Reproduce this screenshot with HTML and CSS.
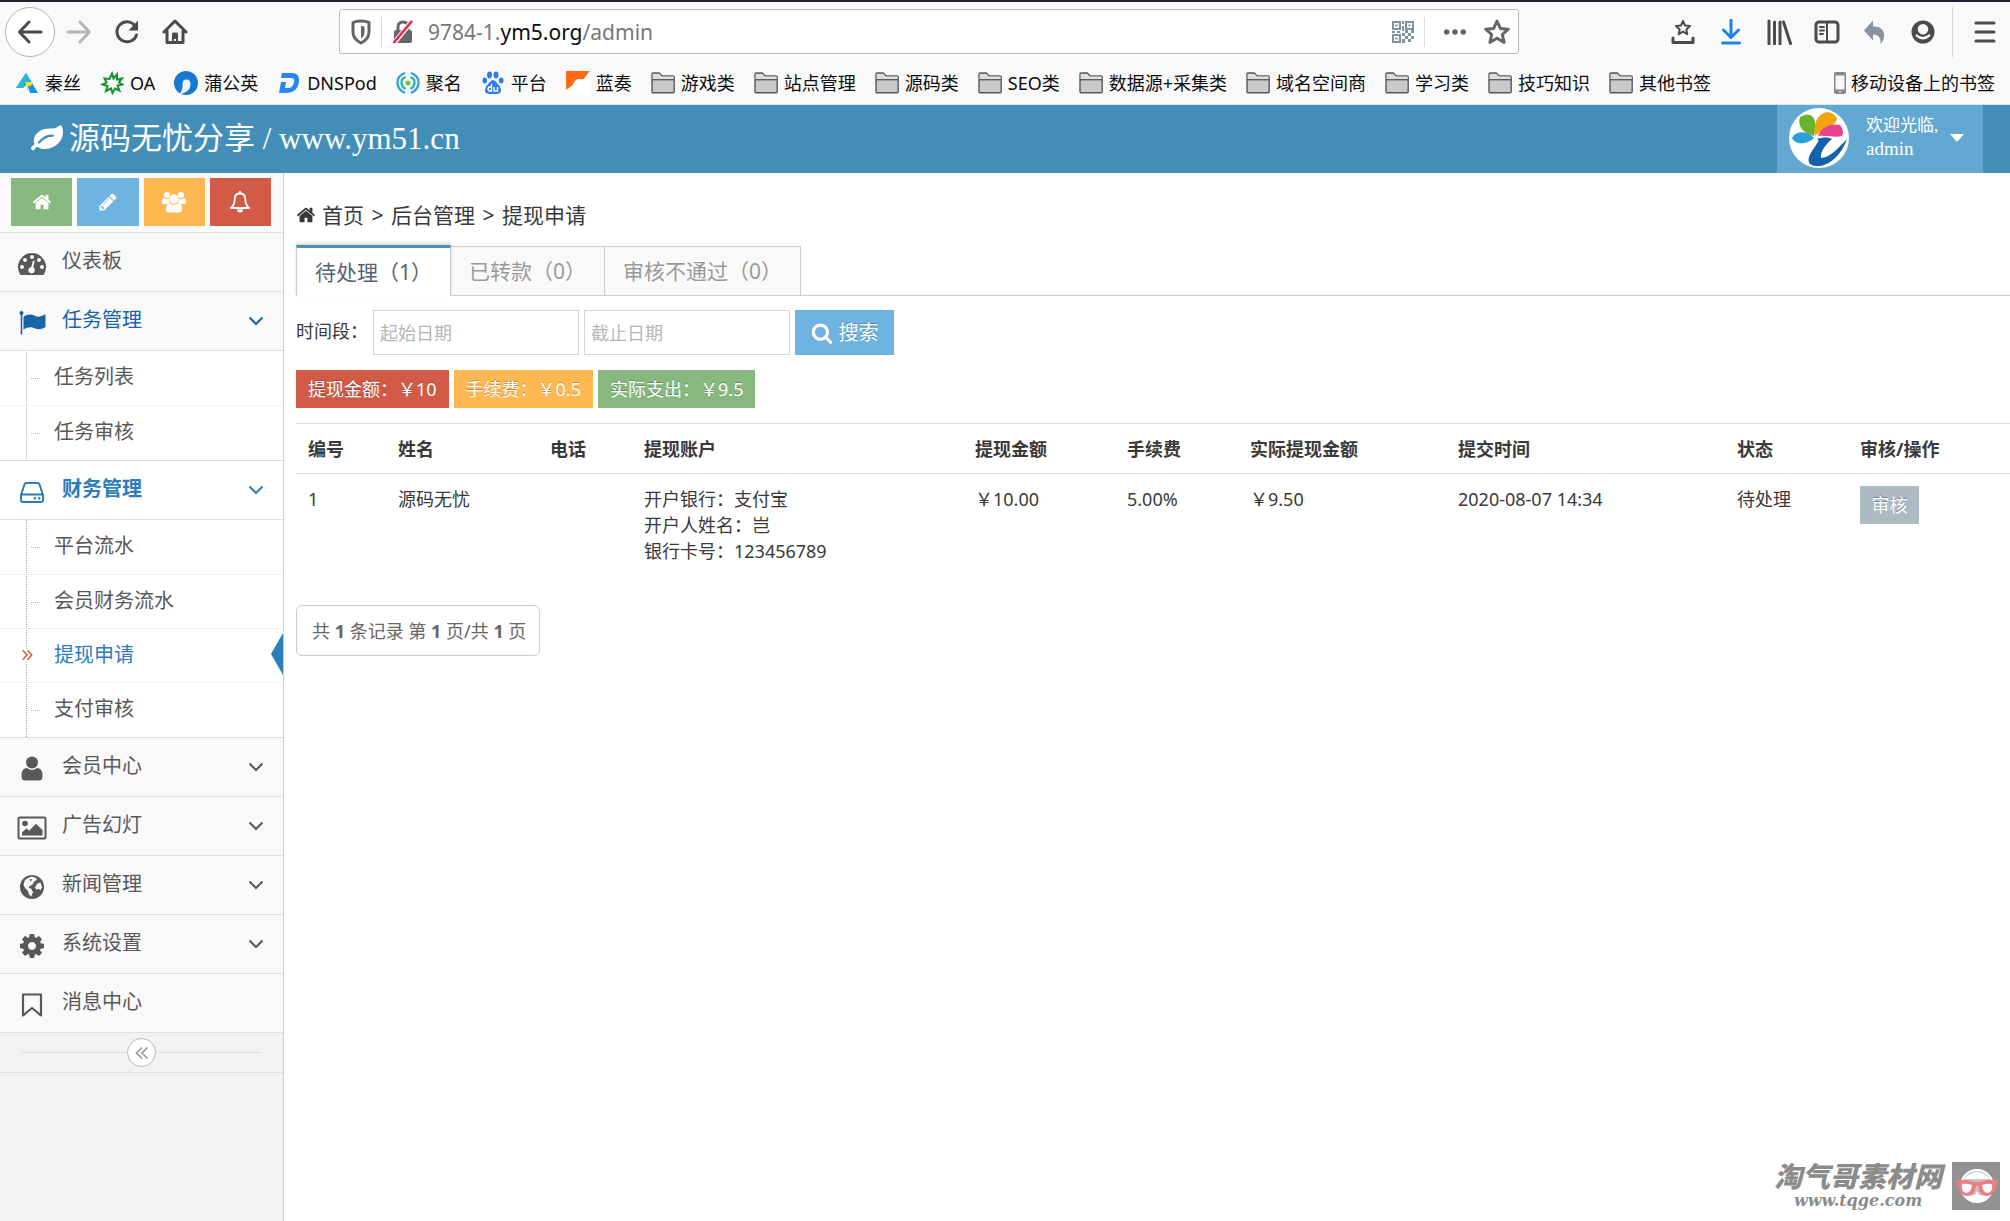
FILE: index.html
```html
<!DOCTYPE html>
<html lang="zh-CN">
<head>
<meta charset="utf-8">
<meta name="viewport" content="width=device-width, initial-scale=1">
<title>提现申请 - 后台管理</title>
<link rel="stylesheet" href="styles.css">
</head>
<body>
<svg class="sprite" aria-hidden="true">
  <symbol id="home" viewBox="0 0 1792 1792"><path d="M1472 992v480q0 26-19 45t-45 19h-384v-384h-256v384h-384q-26 0-45-19t-19-45v-480q0-1 .5-3t.5-3l575-474 575 474q1 2 1 6zm223-69l-62 74q-8 9-21 11h-3q-13 0-21-7l-692-577-692 577q-12 8-24 7-13-2-21-11l-62-74q-8-10-7-23.5t11-21.5l719-599q32-26 76-26t76 26l244 204v-195q0-14 9-23t23-9h192q14 0 23 9t9 23v408l219 182q10 8 11 21.5t-7 23.5z"/></symbol>
  <symbol id="leaf" viewBox="0 0 1792 1792"><path d="M1280 704q0-26-19-45t-45-19q-172 0-318 49.5t-259.5 134-235.5 219.5q-19 21-19 45 0 26 19 45t45 19q24 0 45-19 27-24 74-71t67-66q137-124 268.5-176t313.5-52q26 0 45-19t19-45zm512-198q0 95-20 193-46 224-184.5 383t-357.5 268q-214 108-438 108-148 0-286-47-15-5-88-42t-96-37q-16 0-39.5 32t-45 70-52.5 70-60 32q-43 0-63.5-17.5t-45.5-59.5q-2-4-6-11t-5.5-10-3-9.5-1.5-13.5q0-35 31-73.5t68-65.5 68-56 31-48q0-4-14-38t-16-44q-9-51-9-104 0-115 43.5-220t119-184.5 170.5-139 204-95.5q55-18 145-25.5t179.5-9 178.5-6 163.5-24 113.5-56.5l29.5-29.5 29.5-28 27-20 36.5-16 43.5-4.5q39 0 70.5 46t47.5 112 24 124 8 96z"/></symbol>
  <symbol id="pencil" viewBox="0 0 1792 1792"><path d="M491 1536l91-91-235-235-91 91v107h128v128h107zm523-928q0-22-22-22-10 0-17 7l-542 542q-7 7-7 17 0 22 22 22 10 0 17-7l542-542q7-7 7-17zm-54-192l416 416-832 832h-416v-416zm683 96q0 53-37 90l-166 166-416-416 166-165q36-38 90-38 53 0 91 38l235 234q37 39 37 91z"/></symbol>
  <symbol id="search" viewBox="0 0 1792 1792"><path d="M1216 832q0-185-131.5-316.5t-316.5-131.5-316.5 131.5-131.5 316.5 131.5 316.5 316.5 131.5 316.5-131.5 131.5-316.5zm512 832q0 52-38 90t-90 38q-54 0-90-38l-343-342q-179 124-399 124-143 0-273.5-55.5t-225-150-150-225-55.5-273.5 55.5-273.5 150-225 225-150 273.5-55.5 273.5 55.5 225 150 150 225 55.5 273.5q0 220-124 399l343 343q37 37 37 90z"/></symbol>
  <symbol id="cog" viewBox="0 0 1792 1792"><path d="M1152 896q0-106-75-181t-181-75-181 75-75 181 75 181 181 75 181-75 75-181zm512-109v222q0 12-8 23t-20 13l-185 28q-19 54-39 91 35 50 107 138 10 12 10 25t-9 23q-27 37-99 108t-94 71q-12 0-26-9l-138-108q-44 23-91 38-16 136-29 186-7 28-36 28h-222q-14 0-24.5-8.5t-11.5-21.5l-28-184q-49-16-90-37l-141 107q-10 9-25 9-14 0-25-11-126-114-165-168-7-10-7-23 0-12 8-23 15-21 51-66.5t54-70.5q-27-50-41-99l-183-27q-13-2-21-12.5t-8-23.5v-222q0-12 8-23t19-13l186-28q14-46 39-92-40-57-107-138-10-12-10-24 0-10 9-23 26-36 98.5-107.5t94.5-71.5q13 0 26 10l138 107q44-23 91-38 16-136 29-186 7-28 36-28h222q14 0 24.5 8.5t11.5 21.5l28 184q49 16 90 37l142-107q9-9 24-9 13 0 25 10 129 119 165 170 7 8 7 22 0 12-8 23-15 21-51 66.5t-54 70.5q26 50 41 98l183 28q13 2 21 12.5t8 23.5z"/></symbol>
  <symbol id="users" viewBox="0 0 24 24"><circle cx="5" cy="5" r="3"/><circle cx="19" cy="5" r="3"/><path d="M0 13.500V11q0-3 2-3 3 2 5 .5Q7 11 8 12.500L6 14H2q-2 0-2-.5zM24 13.500V11q0-3-2-3-3 2-5 .5 0 2.500-1 4l2 1.500h4q2 0 2-.5z"/><circle cx="12" cy="9" r="4.700"/><path d="M4 19.500q0-5.800 3.600-6.200 4.400 3 8.800 0 3.600.4 3.600 6.200 0 3-3 3H7q-3 0-3-3z"/></symbol>
  <symbol id="bell" viewBox="0 0 24 24"><path d="M12 3.500c-3.500 0-5.300 2.500-5.300 5.500 0 4.500-1.200 6.800-3.700 9h18c-2.500-2.200-3.700-4.500-3.700-9 0-3-1.800-5.500-5.300-5.500z" fill="none" stroke="currentColor" stroke-width="1.800" stroke-linejoin="round"/><circle cx="12" cy="2.500" r="1.500"/><path d="M9 19.500h6a3 3 0 0 1-6 0z"/></symbol>
  <symbol id="gauge" viewBox="0 0 28 28"><path fill-rule="evenodd" d="M14 3a14 14 0 0 0-11.800 21.400q.4.600 1.100.600h21.400q.7 0 1.100-.600A14 14 0 0 0 14 3zM4 15a2 2 0 1 1 0 4 2 2 0 0 1 0-4zm3-7a2 2 0 1 1 0 4 2 2 0 0 1 0-4zm7-3a2 2 0 1 1 0 4 2 2 0 0 1 0-4zm7 3a2 2 0 1 1 0 4 2 2 0 0 1 0-4zm3 7a2 2 0 1 1 0 4 2 2 0 0 1 0-4zm-8.300-4.600q1.200.200.900 1.200l-1.300 5.900a3.200 3.200 0 1 1-2-.500l1.400-5.800q.300-.900 1-.800z"/></symbol>
  <symbol id="flag" viewBox="0 0 28 28"><circle cx="3.500" cy="4" r="2"/><path d="M2.700 4h1.600v21.500H2.700zM5.500 7.500C9 5.500 13 4.500 17 6.800c3 1.600 6 .8 10.500-1.600V18c-4 2.400-7.500 3-11 1.200-3.700-1.800-7-.8-11 1.200z"/></symbol>
  <symbol id="drive" viewBox="0 0 28 28"><g fill="none" stroke="currentColor" stroke-width="2" stroke-linejoin="round"><path d="M3 16.500h22V22q0 2-2 2H5q-2 0-2-2zM3 17L6.500 6.500Q7 5 8.500 5h11q1.500 0 2 1.500L25 17"/></g><circle cx="17" cy="20.300" r="1.200"/><circle cx="21.200" cy="20.300" r="1.200"/></symbol>
  <symbol id="user" viewBox="0 0 28 28"><circle cx="14" cy="7.500" r="6"/><path d="M3.500 21q0-8 5.500-8 5 4 10 0 5.500 0 5.500 8 0 4.500-3.500 4.500H7q-3.500 0-3.500-4.500z"/></symbol>
  <symbol id="image" viewBox="0 0 30 28"><rect x="1.500" y="3.500" width="27" height="21" rx="1.500" fill="none" stroke="currentColor" stroke-width="2"/><circle cx="8" cy="9.500" r="2.800"/><path d="M5 21.500v-3l4.500-4.200 2.500 2.400 7-7 6.500 6.300v5.500z"/></symbol>
  <symbol id="globe" viewBox="0 0 28 28"><circle cx="14" cy="14" r="12"/><path class="cut" d="M11 4.500l3-1 4 1.500 1 2-2.500 1-1.500 3-3 2-1.500 1.500 3 1.500.5 2 1.500 1-1.500 2-.5 2.500-2.500-2-1-3.500-3-3-1.500-3.500 1.500-4.500zM19.500 10.500l3-1 1.500 4.500-1.500 3.500-1.500-1.500-3 .5-1-2.500z"/><path d="M11.500 6l3 .500-2 2z"/></symbol>
  <symbol id="bookmark" viewBox="0 0 28 28"><path d="M5 3.500h18v21L14 17l-9 7.500z" fill="none" stroke="currentColor" stroke-width="2.200" stroke-linejoin="round"/></symbol>
  <symbol id="chev" viewBox="0 0 16 10"><path d="M1.500 1.500L8 8l6.500-6.500" fill="none" stroke="currentColor" stroke-width="2"/></symbol>
  <symbol id="dleft" viewBox="0 0 14 14"><path d="M7 1.500L1.500 7 7 12.500M12.500 1.500L7 7l5.500 5.500" fill="none" stroke="currentColor" stroke-width="1.600"/></symbol>
  <symbol id="dright" viewBox="0 0 14 14"><path d="M2 1.500L7 7l-5 5.500M7.500 1.500l5 5.500-5 5.500" fill="none" stroke="currentColor" stroke-width="1.800"/></symbol>
  <symbol id="folder" viewBox="0 0 24 24"><path d="M1 20.500V3.200Q1 2 2.200 2h6l3 3H22q1.200 0 1.200 1.200v14.300q0 1.200-1.200 1.200H2.200Q1 21.700 1 20.500z" fill="#c9c9cb" stroke="#58585a" stroke-width="1.400"/><path d="M1.700 3h6.500l2.500 2.500h11.800v3H1.700z" fill="#dededf"/><path d="M1 8.700h22.200" stroke="#58585a" stroke-width="1.300"/></symbol>
</svg>

<div class="browser">
  <div class="toolbar">
    <nav class="nav-buttons" aria-label="浏览器导航">
      <button class="tool back" aria-label="后退"><svg viewBox="0 0 26 26"><path d="M24 13H3M12 3L2.500 13 12 23" class="line"/></svg></button>
      <button class="tool faded" aria-label="前进"><svg viewBox="0 0 26 26"><path d="M2 13h21M14 3l9.500 10L14 23" class="line"/></svg></button>
      <button class="tool" aria-label="刷新"><svg viewBox="0 0 26 26"><path d="M21.500 7.500A10 10 0 1 0 22.500 16" class="line"/><path d="M24 1.500v10H14.500z"/></svg></button>
      <button class="tool" aria-label="主页"><svg viewBox="0 0 26 26"><path d="M2 13L13 2l11 11M5 12v11.500h16V12" class="line"/><path d="M10 15q0-1.500 1.500-1.500h3Q16 13.500 16 15v9h-2v-4h-2v4h-2z"/></svg></button>
    </nav>
    <div class="urlbar">
      <button class="cell shield" aria-label="跟踪保护"><svg viewBox="0 0 24 26"><path d="M12 2q5 0 8 1.500V13q0 7-8 11-8-4-8-11V3.500Q7 2 12 2z" class="line"/><path d="M12 7q2 0 3.500.5V13q0 4-3.500 6.500z"/></svg></button>
      <button class="cell" aria-label="连接不安全"><svg viewBox="0 0 24 26"><path d="M7 12V8q0-5 5-5t5 5v4" class="line"/><rect x="3" y="11" width="18" height="13" rx="2"/><path d="M3 24L21 2" stroke="#f8f8f8" stroke-width="5"/><path d="M2.500 24L21 2" stroke="#e22850" stroke-width="2.600"/></svg></button>
      <span class="url">9784-1.<b>ym5.org</b>/admin</span>
      <button class="cell qr" aria-label="二维码"><svg viewBox="0 0 24 24"><g fill="none" stroke="currentColor" stroke-width="2"><rect x="2" y="2" width="7" height="7"/><rect x="15" y="2" width="7" height="7"/><rect x="2" y="15" width="7" height="7"/></g><path d="M4.500 4.500h2v2h-2zM17.500 4.500h2v2h-2zM4.500 17.500h2v2h-2zM11 1h2v3h-2zM11 6h2v5h-2zM1 11h3v2H1zM6 11h3v2H6zM11 13h3v3h-3zM14 16h3v3h-3zM17 13h3v3h-3zM20 16h3v3h-3zM17 19h3v3h-3zM11 19h3v4h-3zM14 10h3v3h-3zM20 10h3v3h-3z"/></svg></button>
      <button class="cell dots" aria-label="页面操作"><svg viewBox="0 0 26 26"><circle cx="4" cy="13" r="3"/><circle cx="13" cy="13" r="3"/><circle cx="22" cy="13" r="3"/></svg></button>
      <button class="cell star" aria-label="收藏"><svg viewBox="0 0 26 26"><path d="M13 2l3.300 7.400 8 .8-6 5.300 1.800 7.900-7.100-4.200-7.100 4.200 1.800-7.900-6-5.300 8-.8z" class="line"/></svg></button>
    </div>
    <div class="tools">
      <button class="tool" aria-label="书签菜单"><svg viewBox="0 0 26 26"><path d="M13 2l2 4.500 5 .5-3.700 3.400 1 4.800-4.300-2.500-4.300 2.500 1-4.800L6 7l5-.5z" class="line thin"/><path d="M3 19v4.500h20V19" class="line"/></svg></button>
      <button class="tool blue" aria-label="下载"><svg viewBox="0 0 26 26"><path d="M13 1v17M5.500 11l7.500 7.500L20.500 11M4.500 24h17" class="line"/></svg></button>
      <button class="tool" aria-label="我的足迹"><svg viewBox="0 0 26 26"><path d="M3 2v23M8.500 3v22M14 3v22M17.500 3l7 21.500" class="line"/></svg></button>
      <button class="tool" aria-label="侧栏"><svg viewBox="0 0 26 26"><rect x="2" y="3" width="22" height="20" rx="3" class="line"/><path d="M13 3v20M6 8h4M6 11.500h4M6 15h3" class="line thin"/></svg></button>
      <button class="tool gray" aria-label="撤销"><svg viewBox="0 0 26 26"><path d="M11 1.500v6C19 7 23 12 22 18q-.5 4-3.500 7 1.500-9-7.500-9.500v6L2 11.500z"/></svg></button>
      <button class="tool" aria-label="账户"><svg viewBox="0 0 26 26"><path fill-rule="evenodd" d="M13 1.500a11.500 11.500 0 1 0 0 23 11.500 11.500 0 0 0 0-23zM13 5a5 5 0 1 1 0 10.500A5 5 0 0 1 13 5zM6.500 15q6 6 13 0l1 2q-7.500 7-15 0z"/></svg></button>
      <span class="divider"></span>
      <button class="tool" aria-label="菜单"><svg viewBox="0 0 26 26"><path d="M4 4h18M4 13h18M4 22h18" class="line"/></svg></button>
    </div>
  </div>
  <div class="bookmarks">
    <a href="#"><svg viewBox="0 0 24 24"><path d="M11 2L23 22h-8l-3-9-4 4H1z" fill="#1593e5"/><path d="M11 2l5 8-6 1-2 6H1z" fill="#27b8dc"/><path d="M10 11h8l-2 4h-3v6z" fill="#ffe11b"/></svg>秦丝</a>
    <a href="#"><svg viewBox="0 0 24 24"><path d="M12 2.500l1.500 5 3.500-4v5l5-1-3 4 3.500 2-5 1 2 5-4.500-2-2.500 4.500-1.500-4.500-5 2.500 1.500-5-5-1.500 4-2-2-4 5 .5z" fill="none" stroke="#12952c" stroke-width="2"/></svg>OA</a>
    <a href="#"><svg viewBox="0 0 24 24"><circle cx="12" cy="12" r="12" fill="#1678cf"/><path d="M8.500 12.500q0-4 4-4t4 4.500q0 6-5.500 8.500L5 24q4-5 3.500-11.500z" fill="#e9f2f9"/></svg>蒲公英</a>
    <a href="#"><svg viewBox="0 0 24 24"><path d="M5 2h10q8 0 7 9-2 11-12 11H2L4 11h5l-1 6h3q5 0 6-6 1-4-3-4H4z" fill="#2a86f3"/></svg>DNSPod</a>
    <a href="#"><svg viewBox="0 0 24 24"><g fill="none" stroke-width="2.300"><path d="M9 2Q1 5 1.500 12T9 22M15 2q8 3 7.500 10T15 22" stroke="#2f9de4"/><path d="M9.500 6Q5 8 5.500 12t4 6M14.500 6q4.500 2 4 6t-4 6" stroke="#24b6b4"/></g><circle cx="12" cy="12" r="2.500" fill="#7bc242"/></svg>聚名</a>
    <a href="#"><svg viewBox="0 0 24 24"><g fill="#2b7de9"><ellipse cx="8.500" cy="4" rx="2.500" ry="3.400"/><ellipse cx="15" cy="4" rx="2.500" ry="3.400"/><ellipse cx="3.800" cy="9.500" rx="2.300" ry="3"/><ellipse cx="20.200" cy="9.500" rx="2.300" ry="3"/><path d="M12 9q2 0 4 3l3 3.500q3 7-3 7.500H8q-6-.5-3-7.500L8 12q2-3 4-3z"/></g><path d="M10.500 13v7H8q-2-2 0-4h2.500M13 16v4h3.500v-4" stroke="#fff" fill="none" stroke-width="1.400"/></svg>平台</a>
    <a href="#"><svg viewBox="0 0 24 24"><path d="M0 0h24l-4 5q-2 5-7 3-4 0-6 6l-7 5z" fill="#ff6a13"/><path d="M0 19l7-5q2-6 6-6 5 2 7-3l4-5v24H0z" fill="#fff"/></svg>蓝奏</a>
    <a href="#"><svg><use href="#folder"/></svg>游戏类</a>
    <a href="#"><svg><use href="#folder"/></svg>站点管理</a>
    <a href="#"><svg><use href="#folder"/></svg>源码类</a>
    <a href="#"><svg><use href="#folder"/></svg>SEO类</a>
    <a href="#"><svg><use href="#folder"/></svg>数据源+采集类</a>
    <a href="#"><svg><use href="#folder"/></svg>域名空间商</a>
    <a href="#"><svg><use href="#folder"/></svg>学习类</a>
    <a href="#"><svg><use href="#folder"/></svg>技巧知识</a>
    <a href="#"><svg><use href="#folder"/></svg>其他书签</a>
    <a href="#" class="mobile"><svg class="phone" viewBox="0 0 14 24"><rect x="1" y="1" width="12" height="22" rx="2" fill="#85878a"/><rect x="2.500" y="4.500" width="9" height="14" fill="#f4f6f8"/><circle cx="7" cy="21" r="1" fill="#eee"/></svg>移动设备上的书签</a>
  </div>
</div>

<header class="navbar">
  <a class="brand" href="#"><svg><use href="#leaf"/></svg>源码无忧分享 / www.ym51.cn</a>
  <button class="account">
    <svg class="avatar" viewBox="0 0 60 60"><circle cx="30" cy="30" r="30" fill="#fff"/><path d="M25 28C13 25 8 17 11 9q9-5 13 0c3 5 3 10 1 19z" fill="#68b42e"/><path d="M26 28C24 16 28 6 38 4q8 1 10 7c-2 8-12 8-22 17z" fill="#f2a40d"/><path d="M29 28c4-9 12-13 22-11 3 4 4 8 2 11-8 2-14-1-24 0z" fill="#e8428f"/><path d="M25 30c-7-7-17-8-22 0 3 7 15 7 22 0z" fill="#2a9fd8"/><path d="M28 31c6-2 12-2 15 0-8 7-12 14-11 19 9 0 17-10 26-19-4 12-14 25-27 27-14 1-14-7-6-18 4-6 6-8 3-9z" fill="#1161ae"/></svg>
    <span class="welcome"><small>欢迎光临,</small>admin</span>
    <span class="caret"></span>
  </button>
</header>

<div class="page">
  <aside class="sidebar">
    <div class="shortcuts">
      <button class="green" aria-label="首页"><svg><use href="#home"/></svg></button>
      <button class="sky" aria-label="编辑"><svg><use href="#pencil"/></svg></button>
      <button class="orange" aria-label="会员"><svg class="wide"><use href="#users"/></svg></button>
      <button class="red" aria-label="通知"><svg class="wide"><use href="#bell"/></svg></button>
    </div>
    <ul class="menu">
      <li><a href="#"><svg class="icon"><use href="#gauge"/></svg>仪表板</a></li>
      <li class="hover"><a href="#"><svg class="icon"><use href="#flag"/></svg>任务管理<svg class="arrow"><use href="#chev"/></svg></a>
        <ul class="sub">
          <li><a href="#">任务列表</a></li>
          <li><a href="#">任务审核</a></li>
        </ul>
      </li>
      <li class="open"><a href="#"><svg class="icon"><use href="#drive"/></svg>财务管理<svg class="arrow"><use href="#chev"/></svg></a>
        <ul class="sub dotted">
          <li><a href="#">平台流水</a></li>
          <li><a href="#">会员财务流水</a></li>
          <li class="current"><a href="#"><svg class="mark"><use href="#dright"/></svg>提现申请</a></li>
          <li><a href="#">支付审核</a></li>
        </ul>
      </li>
      <li><a href="#"><svg class="icon"><use href="#user"/></svg>会员中心<svg class="arrow"><use href="#chev"/></svg></a></li>
      <li><a href="#"><svg class="icon"><use href="#image"/></svg>广告幻灯<svg class="arrow"><use href="#chev"/></svg></a></li>
      <li><a href="#"><svg class="icon"><use href="#globe"/></svg>新闻管理<svg class="arrow"><use href="#chev"/></svg></a></li>
      <li><a href="#"><svg class="icon"><use href="#cog"/></svg>系统设置<svg class="arrow"><use href="#chev"/></svg></a></li>
      <li><a href="#"><svg class="icon"><use href="#bookmark"/></svg>消息中心</a></li>
    </ul>
    <div class="collapse"><button aria-label="收起菜单"><svg><use href="#dleft"/></svg></button></div>
  </aside>

  <main class="content">
    <nav class="crumbs" aria-label="面包屑"><svg><use href="#home"/></svg><a href="#">首页</a> <i>&gt;</i> <a href="#">后台管理</a> <i>&gt;</i> <span>提现申请</span></nav>
    <nav class="tabs">
      <a class="active" href="#">待处理（1）</a>
      <a href="#">已转款（0）</a>
      <a href="#">审核不通过（0）</a>
    </nav>
    <form class="filter">
      <label for="from">时间段：</label>
      <input id="from" type="text" placeholder="起始日期">
      <input type="text" placeholder="截止日期" aria-label="截止日期">
      <button type="button"><svg><use href="#search"/></svg>搜索</button>
    </form>
    <div class="totals">
      <span class="red">提现金额：￥10</span>
      <span class="orange">手续费：￥0.5</span>
      <span class="green">实际支出：￥9.5</span>
    </div>
    <table class="records">
      <colgroup><col class="c-id"><col class="c-name"><col class="c-phone"><col class="c-bank"><col class="c-name"><col class="c-fee"><col class="c-real"><col class="c-time"><col class="c-fee"><col class="c-act"></colgroup>
      <thead>
        <tr><th>编号</th><th>姓名</th><th>电话</th><th>提现账户</th><th>提现金额</th><th>手续费</th><th>实际提现金额</th><th>提交时间</th><th>状态</th><th>审核/操作</th></tr>
      </thead>
      <tbody>
        <tr><td>1</td><td>源码无忧</td><td></td><td>开户银行：支付宝<br>开户人姓名：岂<br>银行卡号：123456789</td><td>￥10.00</td><td>5.00%</td><td>￥9.50</td><td>2020-08-07 14:34</td><td>待处理</td><td><button class="review">审核</button></td></tr>
      </tbody>
    </table>
    <div class="pager">共 <b>1</b> 条记录 第 <b>1</b> 页/共 <b>1</b> 页</div>
  </main>
</div>

<div class="watermark">
  <div class="mark-text"><strong>淘气哥素材网</strong><em>www.tqge.com</em></div>
  <svg viewBox="0 0 48 48"><path d="M0 0h48v48H0z" fill="#929292"/><circle cx="25" cy="24" r="17" fill="#fff"/><circle cx="25" cy="24" r="15" fill="#c4c4c4"/><path d="M11 28q1 12 14 13 13-1 14-13l-5 5h-7l-2-4-2 4h-7z" fill="#fff"/><path d="M12 17q13-14 26 0z" fill="#fff"/><path d="M4 18q10-1 18 2h6q8-3 18-2l-1 5q-2 1-2 4-2 7-8 7-8 0-9-10h-2q-1 10-9 10-6 0-8-7 0-3-2-4z" fill="#e87f84"/><path d="M10 22q5-1 10 1-1 8-6 8-5-1-4-9zM40 22q-5-1-10 1 1 8 6 8 5-1 4-9z" fill="#fff"/></svg>
</div>
</body>
</html>
```
FILE: styles.css
```css
* { box-sizing: border-box; }

body {
  margin: 0;
  min-height: 100vh;
  display: flex;
  flex-direction: column;
  background: #fff;
  color: #393939;
  font-family: "Noto Sans", "Noto Sans CJK SC", sans-serif;
  font-size: 18px;
  line-height: 26px;
}

a { color: inherit; text-decoration: none; }
button { border: 0; padding: 0; background: none; color: inherit; font: inherit; cursor: pointer; }
svg { flex: none; fill: currentColor; }
ul { list-style: none; margin: 0; padding: 0; }

.sprite { position: absolute; width: 0; height: 0; }
.green { background: #87b87f; }
.sky { background: #6fb3e0; }
.orange { background: #ffb752; }
.red { background: #d15b47; }

/* Browser frame */
.browser { background: #f9f9fa; color: #0c0c0d; border-bottom: 1px solid #d5e6ee; border-top: 2px solid #23202f; }
.toolbar { display: flex; align-items: center; height: 59px; padding-right: 1px; color: #4b4b4d; }
.tool { display: flex; flex: none; align-items: center; justify-content: center; width: 48px; height: 50px; }
.tool svg { width: 26px; height: 26px; }
.line { fill: none; stroke: currentColor; stroke-width: 3; stroke-linecap: round; stroke-linejoin: round; }
.thin { stroke-width: 2; }
.nav-buttons { display: flex; flex: none; width: 339px; padding-left: 5px; }
.back { width: 50px; border: 1px solid #b4b4b6; border-radius: 50%; background: #fff; }
.faded { color: #b6b6b8; }
.blue { color: #1787e8; }
.gray { color: #8b93a0; }
.tools { display: flex; flex: none; justify-content: flex-end; width: 490px; }
.divider { width: 1px; margin: 0 8px 0 5px; background: #d2d3da; }

.urlbar { display: flex; flex: 1; align-items: center; height: 45px; background: #fff; border: 1px solid #b9bac4; border-radius: 3px; color: #66666a; }
.cell { display: flex; align-items: center; justify-content: center; width: 42px; height: 30px; }
.cell svg { width: 24px; height: 26px; }
.shield { border-right: 1px solid #dcdce0; }
.qr { color: #8490a1; }
.dots { width: 52px; padding-left: 8px; border-left: 1px solid #dcdce0; }
.star svg { width: 26px; }
.url { flex: 1; padding-left: 4px; color: #77777b; font-size: 21px; }
.url b { color: #0c0c0d; font-weight: 400; }

.bookmarks { display: flex; align-items: center; gap: 19px; height: 43px; padding: 0 15px; white-space: nowrap; }
.bookmarks a { display: flex; align-items: center; gap: 6px; }
.bookmarks svg { width: 24px; height: 24px; }
.bookmarks .mobile { margin-left: auto; gap: 4px; }
.bookmarks .phone { width: 14px; }

/* Site header */
.navbar { display: flex; justify-content: space-between; height: 68px; padding: 0 27px 0 31px; background: #438eb9; color: #fff; font-family: "Liberation Serif", "Noto Sans CJK SC", serif; }
.brand { display: flex; align-items: center; gap: 6px; font-size: 31px; white-space: pre; }
.brand svg { width: 32px; height: 32px; }
.account { display: flex; align-items: center; width: 206px; padding: 0 0 2px 12px; background: #62a8d1; text-align: left; }
.avatar { width: 60px; height: 60px; margin-right: 17px; }
.welcome { width: 84px; padding-bottom: 2px; font-size: 19px; line-height: 23px; }
.welcome small { display: block; font-size: 17px; }
.caret { border: 7px solid transparent; border-top: 8px solid #fff; border-bottom: 0; }

/* Sidebar */
.page { display: flex; flex: 1; }
.sidebar { flex: none; width: 284px; background: #f2f2f2; border-right: 1px solid #ccc; color: #585858; font-size: 20px; }
.shortcuts { display: grid; grid-template-columns: repeat(4, 1fr); gap: 5px; padding: 5px 12px 6px 11px; background: #fafafa; }
.shortcuts button { display: flex; align-items: center; justify-content: center; height: 48px; color: #fff; }
.shortcuts svg { width: 20px; height: 20px; }
.shortcuts .wide { width: 24px; height: 24px; }
.menu { border-bottom: 1px solid #e0e0e0; }
.menu > li > a { display: flex; align-items: center; height: 59px; padding: 0 19px 2px 17px; border-top: 1px solid #e0e0e0; background: #f9f9f9; }
.icon { width: 30px; height: 28px; margin: 5px 15px 0 0; }
.arrow { width: 16px; height: 10px; margin: 2px 0 0 auto; }
.cut { fill: #f9f9f9; }
.hover > a { color: #1963aa; }
.open > a { color: #2b7dbc; font-weight: 700; }
.menu > .open > a { background: #fff; }
.sub { position: relative; padding-bottom: 1px; background: #fff; border-top: 1px solid #e0e0e0; }
.sub::before { content: ""; position: absolute; top: 0; bottom: 0; left: 26px; border-left: 1px solid #ddd; }
.dotted::before { border-left: 1px dotted #aaa; }
.sub li { position: relative; height: 54px; }
.sub li + li { border-top: 1px solid #f2f2f2; }
.sub a { display: flex; align-items: center; height: 100%; padding: 0 0 2px 54px; }
.sub li::before { content: ""; position: absolute; top: 27px; left: 31px; width: 9px; border-top: 1px dotted #bbb; }
.current a { color: #2b7dbc; }
.sub .current::before { content: none; }
.mark { position: absolute; left: 21px; width: 12px; height: 12px; color: #c86139; background: #fff; }
.current::after { content: ""; position: absolute; right: 0; top: 4px; border: 21px solid transparent; border-right: 12px solid #2b7dbc; border-left: 0; }
.collapse { display: flex; align-items: center; height: 40px; padding: 0 22px; border-bottom: 1px solid #e0e0e0; }
.collapse::before, .collapse::after { content: ""; flex: 1; border-top: 1px solid #ddd; }
.collapse button { display: flex; align-items: center; justify-content: center; width: 29px; height: 29px; border: 1px solid #bbb; border-radius: 50%; background: #fff; color: #999; }
.collapse svg { width: 14px; height: 14px; }

/* Main column */
.content { flex: 1; min-width: 0; padding: 27px 0 0 12px; }
.crumbs { margin-bottom: 15px; font-size: 21px; line-height: 30px; }
.crumbs i { margin: 0 2px; font-style: normal; }
.crumbs svg { width: 20px; height: 20px; margin-right: 6px; vertical-align: -2px; }
.tabs { display: flex; align-items: flex-end; height: 51px; border-bottom: 1px solid #c9cdd2; color: #999; font-size: 21px; }
.tabs a { display: flex; align-items: center; height: 49px; padding: 0 18px; background: #f9f9f9; border: solid #c9cdd2; border-width: 1px 1px 0 0; }
.tabs .active { z-index: 1; height: 51px; margin-bottom: -1px; background: #fff; color: #576373; border-left-width: 1px; border-top: 3px solid #4c8fbd; box-shadow: 0 -2px 3px rgba(0, 0, 0, .15); }
.filter { display: flex; align-items: center; gap: 5px; margin-top: 14px; }
.filter label { width: 72px; padding-bottom: 3px; }
.filter input { width: 206px; height: 45px; padding: 0 6px; border: 1px solid #d5d5d5; border-radius: 0; font: inherit; color: #858585; }
.filter input::placeholder { color: #b6b6b6; opacity: 1; }
.filter button { display: flex; align-items: center; justify-content: center; gap: 6px; width: 99px; height: 45px; background: #6fb3e0; color: #fff; font-size: 20px; text-shadow: 0 -1px 0 rgba(0, 0, 0, .25); }
.filter svg { width: 22px; height: 22px; }
.totals { display: flex; gap: 5px; margin: 15px 0; }
.totals span { height: 38px; padding: 0 12px; color: #fff; line-height: 38px; text-shadow: 0 -1px 0 rgba(0, 0, 0, .25); }

.records { width: 100%; table-layout: fixed; border-collapse: collapse; }
.records th, .records td { padding: 12px; border-top: 1px solid #ddd; text-align: left; vertical-align: top; }
.records th { padding: 12px 12px 11px; }
.c-id { width: 90px; }
.c-name { width: 152px; }
.c-phone { width: 94px; }
.c-bank { width: 331px; }
.c-fee { width: 123px; }
.c-real { width: 208px; }
.c-time { width: 279px; }
.c-act { width: 162px; }
.review { display: block; width: 59px; height: 38px; background: #abbac3; color: #fff; text-shadow: 0 -1px 0 rgba(0, 0, 0, .25); }
.pager { display: inline-block; margin-top: 29px; padding: 12px 13px 11px 15px; border: 1px solid #ccc; border-radius: 6px; color: #666; }

.watermark { position: absolute; right: 10px; bottom: 10px; display: flex; align-items: center; gap: 10px; color: #8b8b8b; }
.watermark svg { width: 48px; height: 48px; }
.mark-text { display: flex; flex-direction: column; align-items: center; }
.mark-text strong { font-size: 28px; font-weight: 900; font-style: italic; line-height: 30px; }
.mark-text em { font: italic 700 16px/20px "DejaVu Serif", serif; }
```
